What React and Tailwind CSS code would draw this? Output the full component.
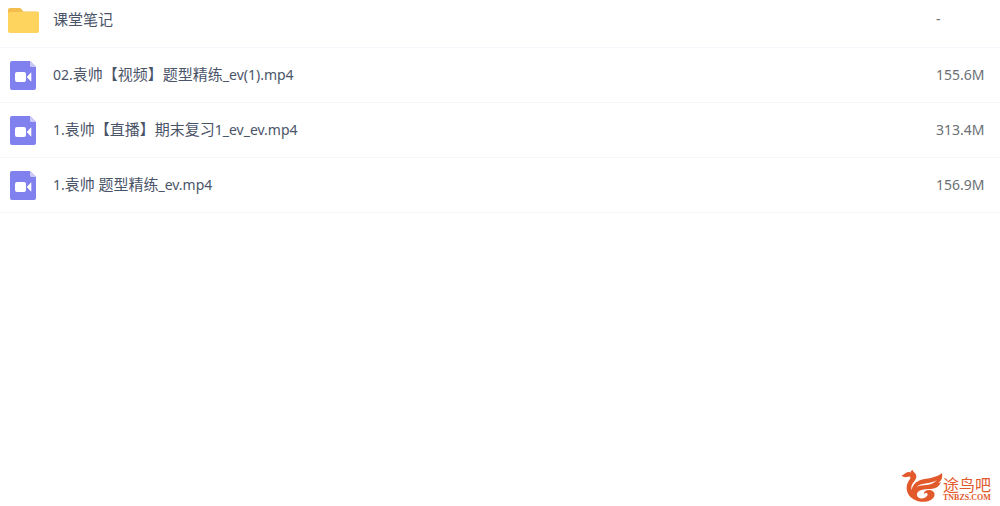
const files = [
  { name: '课堂笔记', size: '-', type: 'folder' },
  { name: '02.袁帅【视频】题型精练_ev(1).mp4', size: '155.6M', type: 'video' },
  { name: '1.袁帅【直播】期末复习1_ev_ev.mp4', size: '313.4M', type: 'video' },
  { name: '1.袁帅 题型精练_ev.mp4', size: '156.9M', type: 'video' },
];

function FolderIcon() {
  return (
    <svg viewBox="0 0 32 32" className="block size-8" aria-hidden="true">
      <path d="M1 7a2 2 0 0 1 2-2h9.500c.8 0 1.400.3 1.900.9l1.800 2.600H30a2 2 0 0 1 2 2V16H1z" fill="#f3bd50" />
      <rect x="1" y="9" width="31" height="21" rx="2" fill="#ffd45e" />
    </svg>
  );
}

function VideoIcon() {
  return (
    <svg viewBox="0 0 32 32" className="block size-8" aria-hidden="true">
      <path d="M5 2h18l6 6v21a2 2 0 0 1-2 2H5a2 2 0 0 1-2-2V4a2 2 0 0 1 2-2z" fill="#8080ee" />
      <path d="M23 2l6 6h-4.500A1.500 1.500 0 0 1 23 6.500z" fill="#c9c9fa" />
      <rect x="8" y="13" width="11" height="10" rx="2" fill="#fff" />
      <path d="M20 18l4-4.200v8.400z" fill="#fff" stroke="#fff" strokeWidth=".6" strokeLinejoin="round" />
    </svg>
  );
}

// Latin runs are set one step smaller than the Chinese around them
function FileName({ name }) {
  return name.split(/([\x20-\x7e]+)/).filter(Boolean).map((part, i) => (
    /^[\x20-\x7e]/.test(part) ? <span key={i} className="text-[14px]">{part}</span> : part
  ));
}

function Logo() {
  return (
    <div className="flex items-end text-[#e2592b]">
      <svg viewBox="18 10 126 96" className="h-8 w-[42px]" aria-hidden="true">
        <path
          d="M19 26C27 26 29 19 37 17C41 16 45 16 48 18C46 14 49 11 53 10C53 15 60 18 63 24C67 34 59 42 54 49C49 56 48 62 50 70C54 50 68 42 85 38C105 34 125 32 141 19C144 34 138 44 130 48C134 48 136 47 138 45C134 58 124 64 112 66C94 68 75 66 67 78C62 91 74 98 85 95C96 92 101 84 96 80C93 78 90 79 87 82C86 73 97 68 108 71C118 74 121 82 117 90C110 102 94 107 78 105C55 102 36 87 35 66C34 53 40 44 45 37C48 32 45 29 40 30C32 32 25 33 19 26Z"
          fill="currentColor"
        />
        <path d="M64 61C74 53 84 52 95 50C107 48 118 45 126 40C118 50 107 53 95 55C84 56 74 56 64 61Z" fill="#fff" />
      </svg>
      <div className="flex flex-col">
        <span className="font-['Noto_Sans_CJK_SC',sans-serif] text-[16px] leading-5">途鸟吧</span>
        <span className="font-['Liberation_Serif',serif] text-[8px] leading-[8px] font-bold">TNBZS.COM</span>
      </div>
    </div>
  );
}

export default function App() {
  return (
    <div className="flex min-h-screen flex-col overflow-hidden bg-white font-['Noto_Sans','Noto_Sans_CJK_SC',sans-serif]">
      <table className="-mt-2 w-full border-collapse text-left">
        <tbody>
          {files.map((file) => (
            <tr key={file.name} className="h-[55px] border-b border-[#f4f7fb]">
              <td className="w-[53px] pl-[7px]">
                {file.type === 'folder' ? <FolderIcon /> : <VideoIcon />}
              </td>
              <td className="text-[15px] leading-5 text-[#4a5468]">
                <a href="#"><FileName name={file.name} /></a>
              </td>
              <td className="w-16 text-[14px] leading-5 text-[#6b6f76]">{file.size}</td>
            </tr>
          ))}
        </tbody>
      </table>
      <footer className="mt-auto self-end pr-[9px] pb-1">
        <Logo />
      </footer>
    </div>
  );
}
